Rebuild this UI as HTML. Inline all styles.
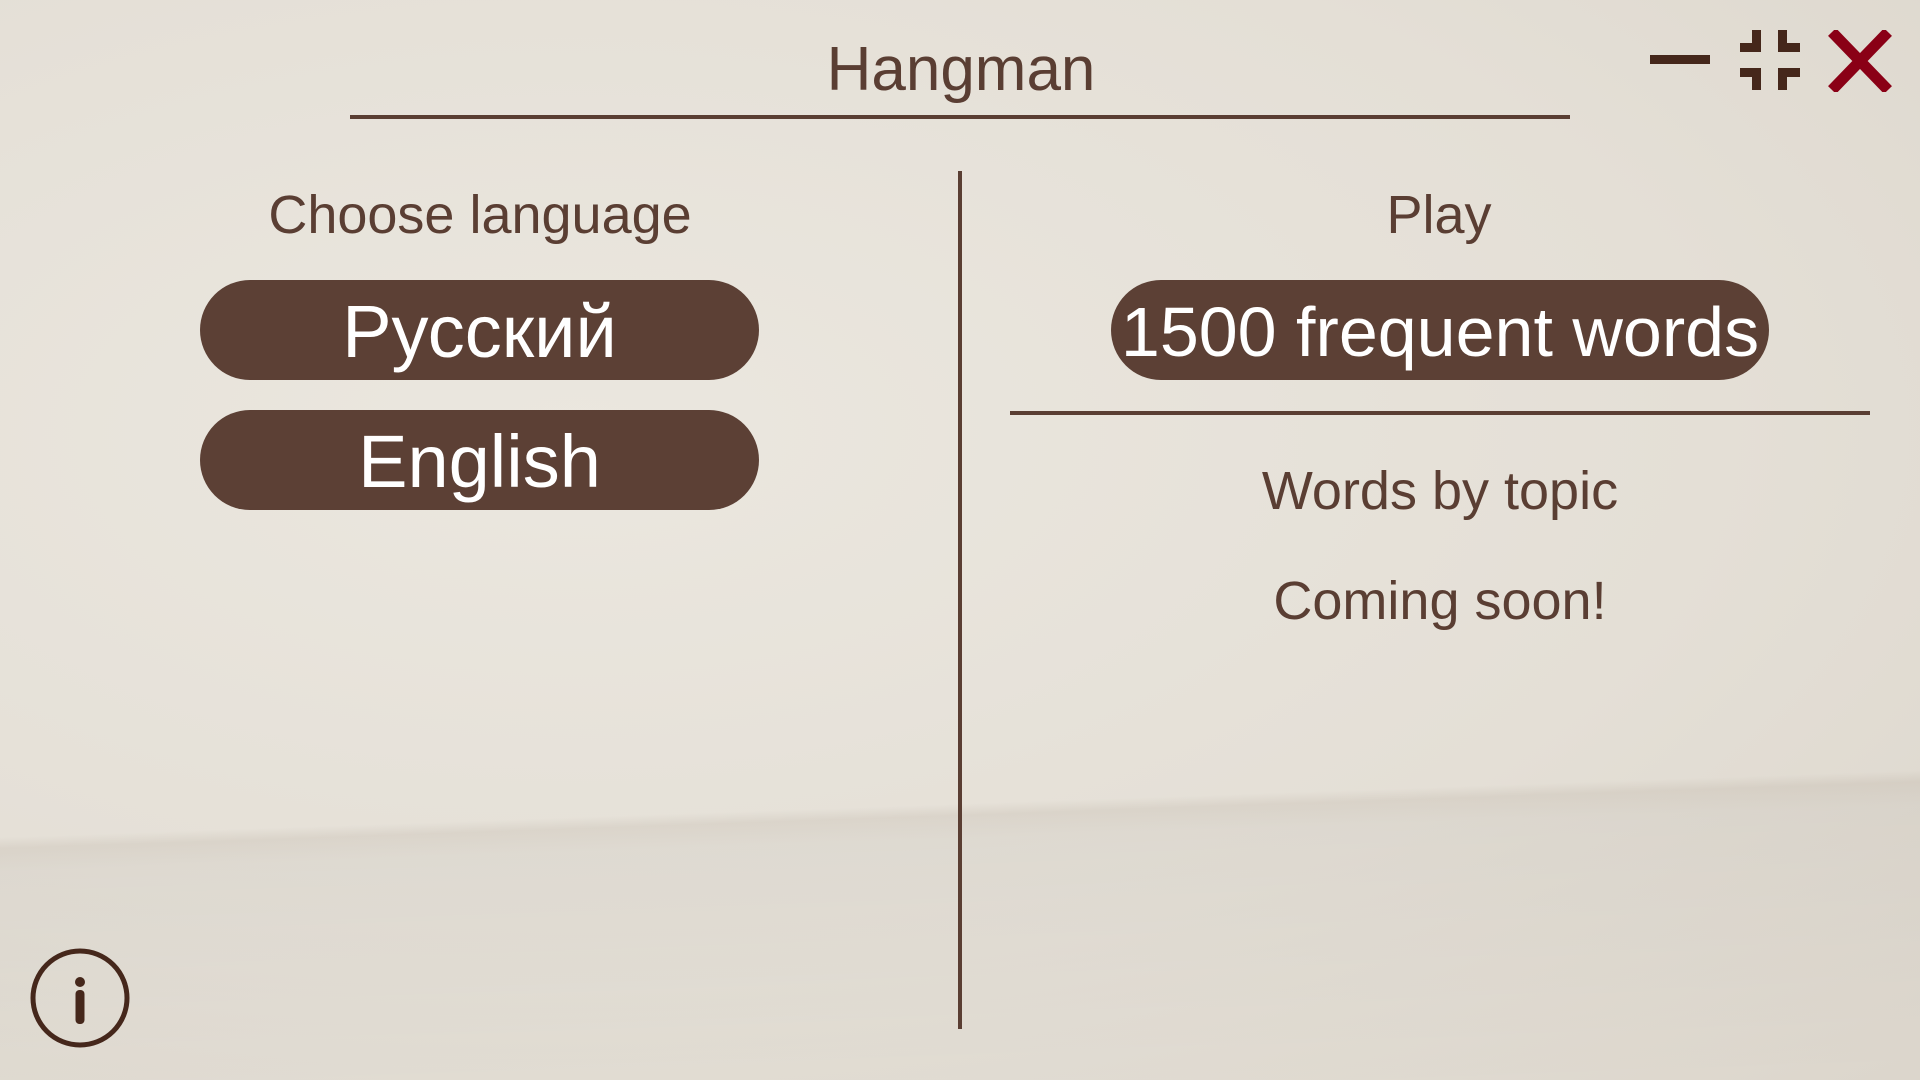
<!DOCTYPE html>
<html><head><meta charset="utf-8"><style>
html,body{margin:0;padding:0}
body{width:1920px;height:1080px;position:relative;overflow:hidden;
background:
linear-gradient(178deg,rgba(0,0,0,0) 0%,rgba(0,0,0,0) 73%,rgba(120,100,80,0.10) 74%,rgba(0,0,0,0.03) 76%,rgba(0,0,0,0) 100%),
radial-gradient(ellipse at 30% 40%,#ebe7df 0%,#e4dfd6 60%,#dcd6cc 100%);
font-family:"Liberation Sans","DejaVu Sans",sans-serif;color:#5a3e33}
.t{position:absolute;text-align:center;white-space:nowrap;transform:translateX(-50%)}
.btn{position:absolute;background:#5c4035;border-radius:50px;color:#fff;text-align:center;height:100px;line-height:104px;white-space:nowrap;overflow:visible}
.ln{position:absolute;background:#5a3e33}
.d{position:absolute;background:#45271b}
</style></head><body>
<div class="t" style="left:961px;top:34px;font-size:62px">Hangman</div>
<div class="ln" style="left:350px;top:115px;width:1220px;height:4px"></div>
<div class="ln" style="left:958px;top:171px;width:4px;height:858px"></div>
<div class="ln" style="left:1010px;top:411px;width:860px;height:4px"></div>

<div class="t" style="left:480px;top:184px;font-size:54px">Choose language</div>
<div class="btn" style="left:200px;top:280px;width:559px;font-size:74px">Русский</div>
<div class="btn" style="left:200px;top:410px;width:559px;font-size:74px">English</div>

<div class="t" style="left:1439px;top:184px;font-size:54px">Play</div>
<div class="btn" style="left:1111px;top:280px;width:658px;font-size:70px">1500 frequent words</div>
<div class="t" style="left:1440px;top:460px;font-size:54px">Words by topic</div>
<div class="t" style="left:1440px;top:570px;font-size:54px">Coming soon!</div>

<div class="d" style="left:1650px;top:55px;width:60px;height:9px"></div>
<div class="d" style="left:1752px;top:30px;width:9px;height:22px"></div>
<div class="d" style="left:1740px;top:43px;width:21px;height:9px"></div>
<div class="d" style="left:1778px;top:30px;width:9px;height:22px"></div>
<div class="d" style="left:1778px;top:43px;width:22px;height:9px"></div>
<div class="d" style="left:1752px;top:68px;width:9px;height:22px"></div>
<div class="d" style="left:1740px;top:68px;width:21px;height:9px"></div>
<div class="d" style="left:1778px;top:68px;width:9px;height:22px"></div>
<div class="d" style="left:1778px;top:68px;width:22px;height:9px"></div>
<svg style="position:absolute;left:1828px;top:30px" width="64" height="62"><path d="M4 2L60 60M60 2L4 60" stroke="#8a0016" stroke-width="11"/></svg>

<svg style="position:absolute;left:20px;top:940px" width="120" height="120">
<circle cx="60" cy="58" r="47" fill="none" stroke="#45271b" stroke-width="5"/>
<circle cx="60" cy="42" r="5" fill="#45271b"/>
<rect x="55.5" y="50" width="9" height="34" rx="4" fill="#45271b"/>
</svg>
</body></html>
